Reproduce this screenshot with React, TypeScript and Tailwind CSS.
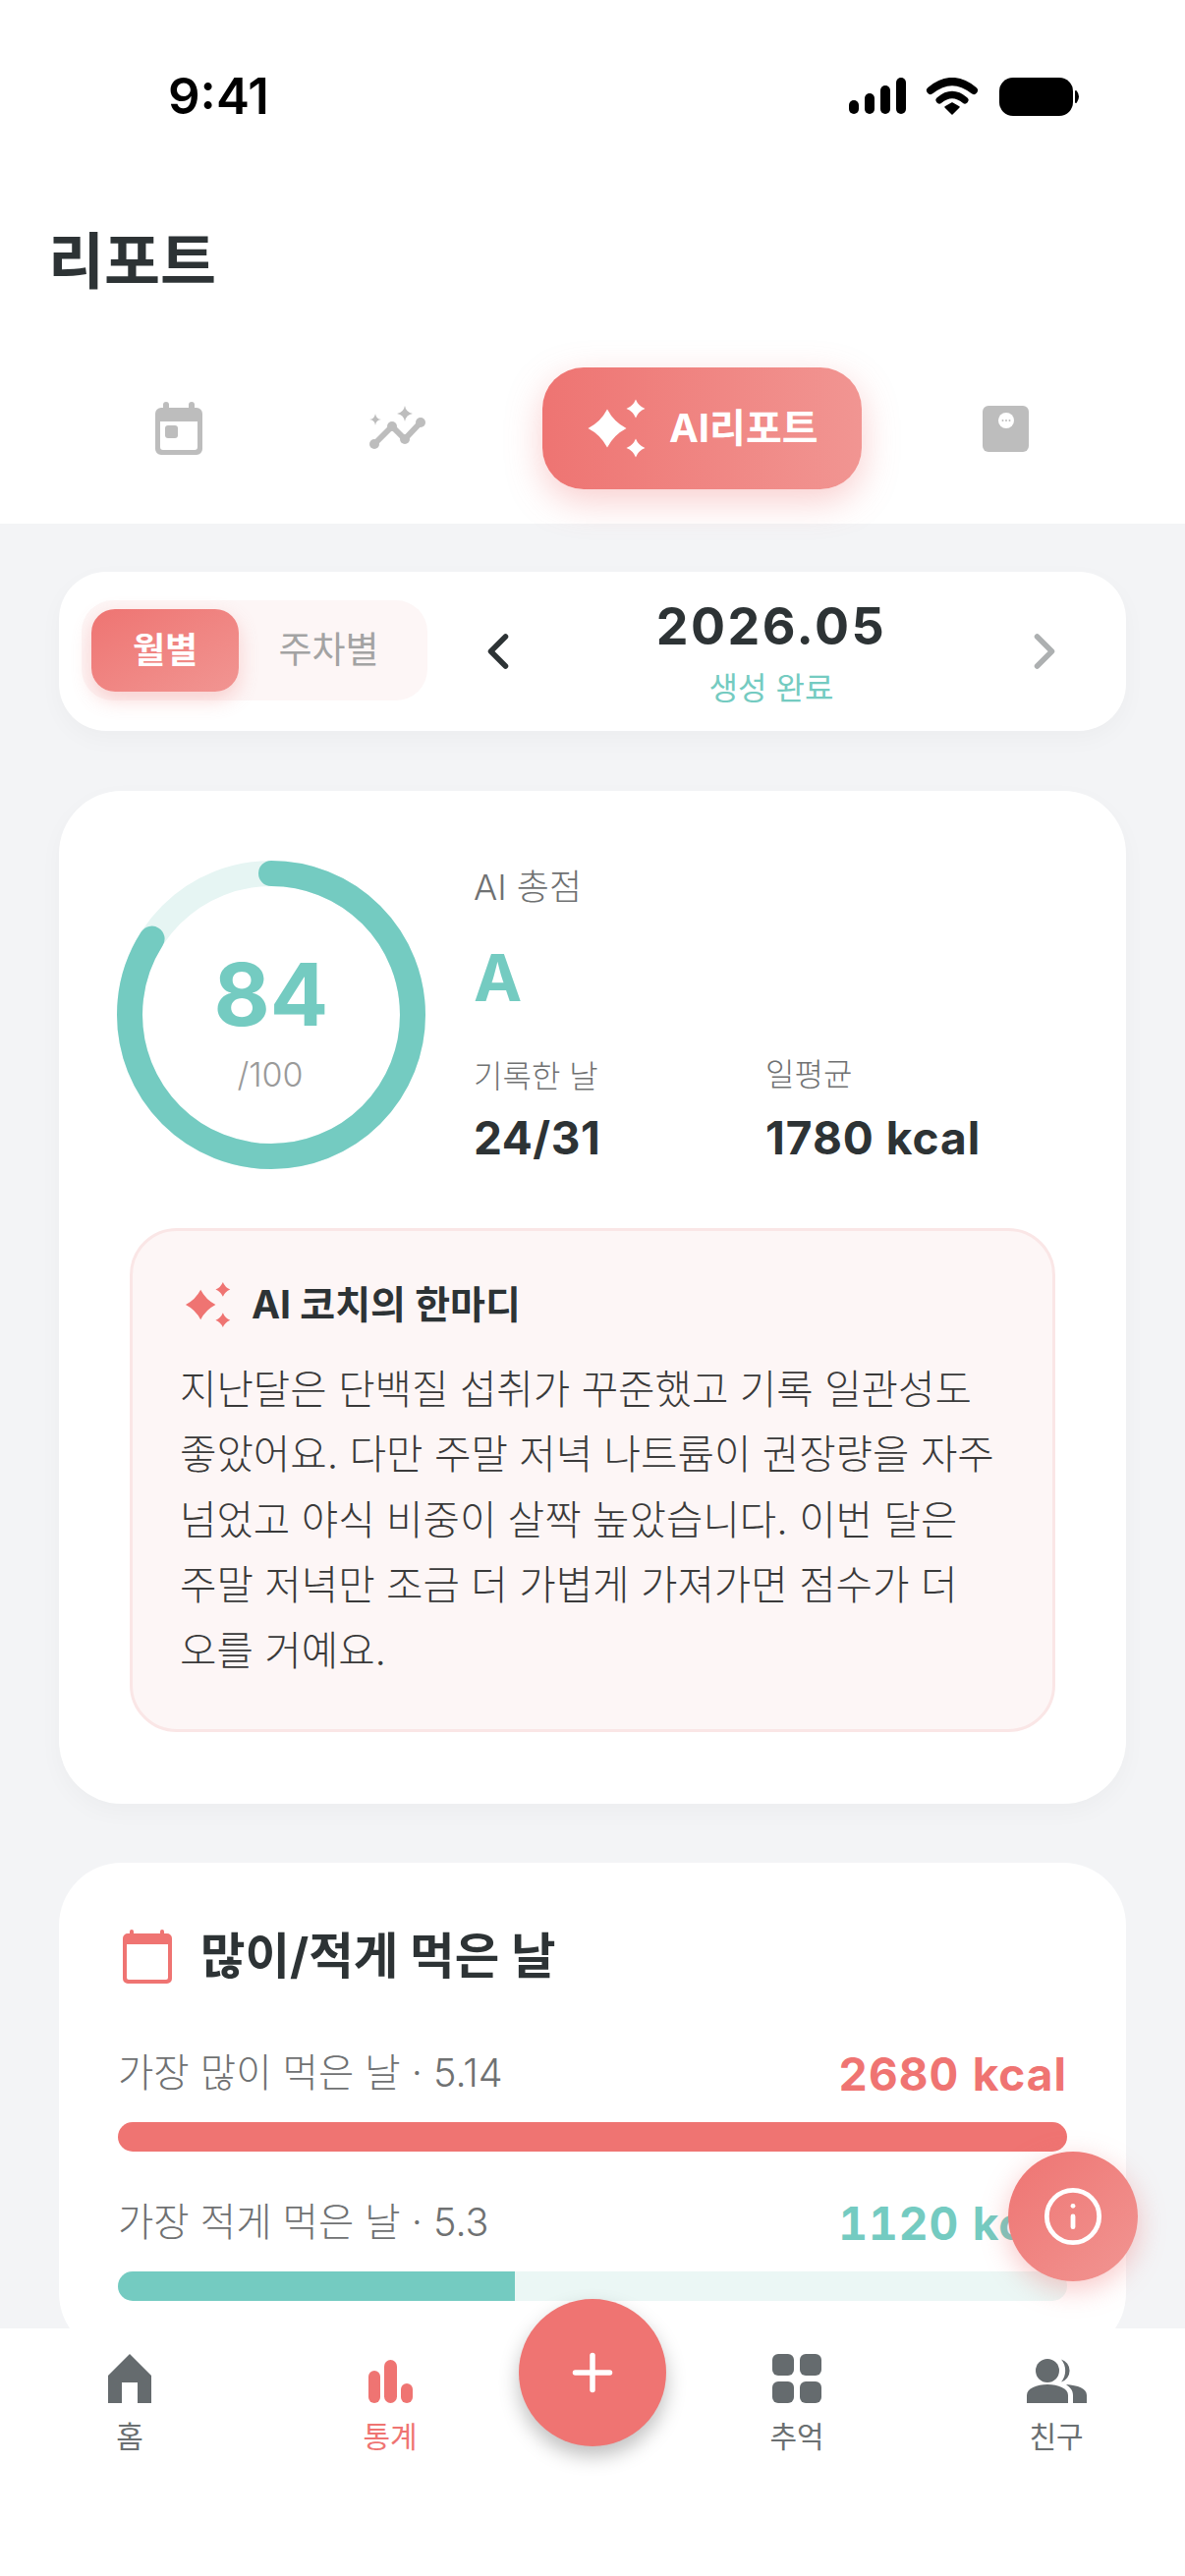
import { Info, Plus, ChevronLeft, ChevronRight } from 'lucide-react';

const FONT = "font-['Inter','Noto_Sans_CJK_KR',sans-serif]";

function star(cx: number, cy: number, r: number, k = 0.22) {
  const a = r * k;
  return `M${cx} ${cy - r}Q${cx + a} ${cy - a} ${cx + r} ${cy}Q${cx + a} ${cy + a} ${cx} ${cy + r}Q${cx - a} ${cy + a} ${cx - r} ${cy}Q${cx - a} ${cy - a} ${cx} ${cy - r}Z`;
}

function Sparkles({ className }: { className?: string }) {
  return (
    <svg viewBox="0 0 64 64" className={className} fill="currentColor">
      <path d={star(22, 32, 19.5, 0.34)} />
      <path d={star(51, 12, 9.5, 0.28)} />
      <path d={star(51, 52, 9.5, 0.28)} />
    </svg>
  );
}

function StatusIcons() {
  return (
    <svg width="236" height="40" viewBox="0 0 236 40" fill="#000">
      <rect x="0" y="23" width="10" height="14" rx="5" />
      <rect x="16" y="16" width="10" height="21" rx="5" />
      <rect x="32" y="8" width="10" height="29" rx="5" />
      <rect x="48" y="0" width="10" height="37" rx="5" />
      <path d="M83 13Q105 -5 127 13" fill="none" stroke="#000" strokeWidth="8" strokeLinecap="round" />
      <path d="M92 23Q105 12 118 23" fill="none" stroke="#000" strokeWidth="7" strokeLinecap="round" />
      <path d="M98 30L105 26L112 30L105 37Z" stroke="#000" strokeWidth="1.5" strokeLinejoin="round" />
      <rect x="153" y="0" width="75" height="39" rx="14" />
      <path d="M231 14Q235 19 231 25Z" stroke="#000" strokeWidth="2" strokeLinejoin="round" />
    </svg>
  );
}

function ScoreRing() {
  const r = 144;
  const c = 2 * Math.PI * r;
  return (
    <div className="relative w-[314px] h-[314px] shrink-0">
      <svg width="314" height="314" viewBox="0 0 314 314" className="-rotate-90">
        <circle cx="157" cy="157" r={r} fill="none" stroke="#e6f5f3" strokeWidth="26" />
        <circle cx="157" cy="157" r={r} fill="none" stroke="#74cbc1" strokeWidth="26" strokeLinecap="round" strokeDasharray={`${c * 0.84} ${c}`} />
      </svg>
      <div className="absolute inset-0 flex flex-col items-center">
        <span className="mt-[83px] text-[88px] leading-[106px] font-bold text-[#74cbc1]">84</span>
        <span className="mt-[9px] -ml-[2px] text-[34px] leading-[40px] font-light text-[#9a9a9a]">/100</span>
      </div>
    </div>
  );
}

function BarRow({ label, value, color, fill, pct }: { label: string; value: string; color: string; fill: string; pct: string }) {
  return (
    <div>
      <div className="flex justify-between items-center h-[50px]">
        <span className="text-[39.5px] font-light text-[#6f7172]">{label}</span>
        <span className={`text-[46px] font-bold tracking-[1px] tabular-nums ${color}`}>{value}</span>
      </div>
      <div className="mt-[24px] h-[30px] rounded-full overflow-hidden bg-[#ebf7f5]">
        <div className={`h-full ${pct} ${fill}`} />
      </div>
    </div>
  );
}

function NavItem({ label, active, children, className }: { label: string; active?: boolean; children: React.ReactNode; className?: string }) {
  return (
    <div className={`flex flex-col items-center ${className ?? ''}`}>
      <div className="h-[50px] flex items-end">{children}</div>
      <span className={`mt-[14px] text-[30px] leading-[40px] ${active ? 'text-[#ef7472]' : 'text-[#6a6f71]'}`}>{label}</span>
    </div>
  );
}

export default function App() {
  return (
    <div className={`${FONT} relative w-[1206px] h-[2622px] overflow-hidden flex flex-col bg-[#f3f4f6] text-[#2d3335]`}>
      {/* Header */}
      <div className="h-[533px] shrink-0 bg-white">
        <div className="flex justify-between items-start pt-[79px] pl-[171px] pr-[106px]">
          <span className="text-[51px] leading-[38px] font-semibold text-black">9:41</span>
          <StatusIcons />
        </div>
        <h1 className="mt-[112px] ml-[49px] text-[62px] leading-[72px] font-bold">리포트</h1>
        <div className="mt-[71px] flex items-center pl-[158px]">
          <svg width="48" height="54" viewBox="0 0 48 54" fill="#bdbdbd">
            <rect x="8" y="0" width="6" height="12" rx="3" />
            <rect x="34" y="0" width="6" height="12" rx="3" />
            <path fillRule="evenodd" d="M6 6H42A6 6 0 0 1 48 12V48A6 6 0 0 1 42 54H6A6 6 0 0 1 0 48V12A6 6 0 0 1 6 6ZM5 20V46A3 3 0 0 0 8 49H40A3 3 0 0 0 43 46V20Z" />
            <rect x="10" y="24" width="13" height="13" rx="3" />
          </svg>
          <svg className="ml-[170px]" width="58" height="46" viewBox="0 0 58 46" fill="#bdbdbd">
            <path d={star(36, 8, 8, 0.15)} />
            <path d={star(6, 14, 6, 0.1)} />
            <path d="M5 39L23 21L36 34L52 17" fill="none" stroke="#bdbdbd" strokeWidth="6" strokeLinecap="round" strokeLinejoin="round" />
            <circle cx="5" cy="39" r="5" />
            <circle cx="23" cy="21" r="5" />
            <circle cx="36" cy="34" r="5" />
            <circle cx="52" cy="17" r="5" />
          </svg>
          <div className="ml-[118px] w-[325px] h-[124px] rounded-[42px] bg-gradient-to-r from-[#ee7472] to-[#f19592] shadow-[0_12px_36px_rgba(238,116,114,0.35)] flex items-center pl-[44px] text-white">
            <Sparkles className="w-[64px] h-[64px]" />
            <span className="ml-[21px] text-[40px] font-bold">AI리포트</span>
          </div>
          <svg className="ml-[123px]" width="47" height="47" viewBox="0 0 47 47">
            <rect width="47" height="47" rx="6" fill="#bdbdbd" />
            <circle cx="24" cy="15" r="8" fill="#fff" />
            <circle cx="20.5" cy="15" r="1" fill="#bdbdbd" />
            <circle cx="24" cy="15" r="1" fill="#bdbdbd" />
            <circle cx="27.5" cy="15" r="1" fill="#bdbdbd" />
          </svg>
        </div>
      </div>

      {/* Content */}
      <div className="flex-1 min-h-0 overflow-hidden px-[60px] pt-[49px]">
        <div className="h-[162px] rounded-[48px] bg-white shadow-[0_8px_24px_rgba(0,0,0,0.03)] flex items-center pl-[23px] relative">
          <div className="w-[352px] h-[102px] rounded-[32px] bg-[#fdf6f6] flex items-center pl-[10px] -mt-[2px]">
            <div className="w-[150px] h-[84px] rounded-[24px] bg-gradient-to-br from-[#ee7472] to-[#f19592] shadow-[0_8px_20px_rgba(238,116,114,0.3)] flex items-center justify-center text-[36px] font-bold text-white">월별</div>
            <div className="w-[183px] text-center text-[37px] text-[#a3a3a3]">주차별</div>
          </div>
          <ChevronLeft className="ml-[42px] text-[#2d3335]" size={60} strokeWidth={2.2} />
          <div className="w-[496px] flex flex-col items-center mt-[2px]">
            <span className="text-[52px] leading-[60px] font-bold tracking-[2.5px]">2026.05</span>
            <span className="mt-[13px] text-[32px] leading-[40px] text-[#74cbc1]">생성 완료</span>
          </div>
          <ChevronRight className="text-[#adb0b1]" size={60} strokeWidth={2.2} />
        </div>

        <div className="mt-[61px] h-[1031px] rounded-[64px] bg-white shadow-[0_8px_24px_rgba(0,0,0,0.03)] pt-[71px]">
          <div className="flex pl-[59px]">
            <ScoreRing />
            <div className="ml-[49px] pt-[3px]">
              <div className="text-[36px] leading-[48px] font-light text-[#6f7172]">AI 총점</div>
              <div className="mt-[28px] text-[66px] leading-[80px] font-bold text-[#74cbc1]">A</div>
              <div className="mt-[39px] flex">
                <div className="w-[297px]">
                  <div className="text-[32px] leading-[44px] font-light text-[#6f7172]">기록한 날</div>
                  <div className="mt-[14px] text-[46px] leading-[52px] font-bold tracking-[0.5px]">24/31</div>
                </div>
                <div className="-mt-[2px]">
                  <div className="text-[32px] leading-[44px] font-light text-[#6f7172]">일평균</div>
                  <div className="mt-[16px] text-[46px] leading-[52px] font-bold tracking-[1px]">1780 kcal</div>
                </div>
              </div>
            </div>
          </div>
          <div className="mx-[72px] mt-[60px] h-[513px] rounded-[48px] border-[3px] border-[#fae6e6] bg-[#fdf6f6] pl-[48px] pr-[40px] pt-[50px]">
            <div className="flex items-center h-[50px]">
              <Sparkles className="ml-[4px] w-[50px] h-[50px] text-[#ef7472]" />
              <span className="ml-[19px] text-[39px] font-bold">AI 코치의 한마디</span>
            </div>
            <p className="mt-[29px] text-[40.7px] leading-[66.4px] font-light text-[#3a3a3a] break-keep">
              지난달은 단백질 섭취가 꾸준했고 기록 일관성도 좋았어요. 다만 주말 저녁 나트륨이 권장량을 자주 넘었고 야식 비중이 살짝 높았습니다. 이번 달은 주말 저녁만 조금 더 가볍게 가져가면 점수가 더 오를 거예요.
            </p>
          </div>
        </div>

        <div className="mt-[60px] h-[502px] rounded-[64px] bg-white px-[60px] pt-[60px]">
          <div className="flex items-center h-[70px] pl-[5px]">
            <svg width="50" height="55" viewBox="0 0 50 55" fill="#ef7472">
              <rect x="7" y="0" width="4" height="10" rx="2" />
              <rect x="38" y="0" width="4" height="10" rx="2" />
              <path fillRule="evenodd" d="M5 4H45A5 5 0 0 1 50 9V50A5 5 0 0 1 45 55H5A5 5 0 0 1 0 50V9A5 5 0 0 1 5 4ZM4 15V49A2 2 0 0 0 6 51H44A2 2 0 0 0 46 49V15Z" />
            </svg>
            <h2 className="ml-[29px] text-[49.5px] font-bold">많이/적게 먹은 날</h2>
          </div>
          <div className="mt-[60px]">
            <BarRow label="가장 많이 먹은 날 · 5.14" value="2680 kcal" color="text-[#ef7472]" fill="bg-[#ef7472]" pct="w-full" />
          </div>
          <div className="mt-[48px]">
            <BarRow label="가장 적게 먹은 날 · 5.3" value="1120 kcal" color="text-[#74cbc1]" fill="bg-[#74cbc1]" pct="w-[41.8%]" />
          </div>
        </div>
      </div>

      {/* Bottom nav */}
      <div className="h-[252px] shrink-0 bg-white relative flex items-start pt-[26px]">
        <NavItem label="홈" className="ml-[110px] w-[44px]">
          <svg width="44" height="50" viewBox="0 0 44 50" fill="#656b6e">
            <path fillRule="evenodd" d="M22 0L44 22V50H30V29H14V50H0V22Z" />
          </svg>
        </NavItem>
        <NavItem label="통계" active className="ml-[213px] w-[60px]">
          <svg width="45" height="44" viewBox="0 0 45 44" fill="#ef7472">
            <rect x="0" y="11" width="12" height="33" rx="6" />
            <rect x="16" y="0" width="13" height="44" rx="6.5" />
            <rect x="33" y="24" width="12" height="20" rx="6" />
          </svg>
        </NavItem>
        <NavItem label="추억" className="ml-[354px] w-[60px]">
          <svg width="50" height="50" viewBox="0 0 50 50" fill="#656b6e">
            <rect x="0" y="0" width="22" height="22" rx="6" />
            <rect x="28" y="0" width="22" height="22" rx="6" />
            <rect x="0" y="28" width="22" height="22" rx="6" />
            <rect x="28" y="28" width="22" height="22" rx="6" />
          </svg>
        </NavItem>
        <NavItem label="친구" className="ml-[204px] w-[60px]">
          <svg width="61" height="45" viewBox="0 0 61 45" fill="#656b6e">
            <circle cx="21" cy="12" r="12" />
            <path d="M0 45V37C0 30 10 26 21 26C32 26 42 30 42 37V45Z" />
            <path d="M35 0.5A12 12 0 0 1 35 23.5A18 18 0 0 0 35 0.5Z" />
            <path d="M40 26C52 27 61 30 61 37V45H47V37C47 32 44 29 40 26Z" />
          </svg>
        </NavItem>
      </div>

      {/* Floating buttons */}
      <div className="absolute left-[528px] top-[2340px] w-[150px] h-[150px] rounded-full bg-[#ef7472] shadow-[0_10px_20px_rgba(0,0,0,0.25)] flex items-center justify-center text-white">
        <Plus size={60} strokeWidth={2.2} />
      </div>
      <div className="absolute left-[1026px] top-[2190px] w-[132px] h-[132px] rounded-full bg-gradient-to-br from-[#ee7472] to-[#f19592] shadow-[0_8px_28px_rgba(238,116,114,0.4)] flex items-center justify-center text-white">
        <Info size={64} strokeWidth={1.8} />
      </div>
    </div>
  );
}
